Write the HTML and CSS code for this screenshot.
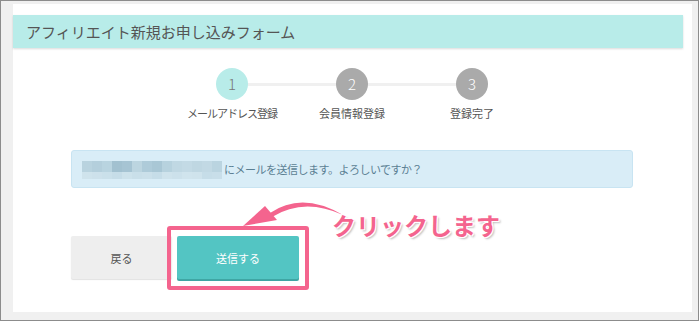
FILE: index.html
```html
<!DOCTYPE html>
<html lang="ja">
<head>
    <meta charset="UTF-8">
    <title>アフィリエイト新規お申し込みフォーム</title>
    <link rel="stylesheet" href="styles.css">
</head>
<body>
    <div class="frame">
        <div class="panel">
            <div class="header">
                <h1>アフィリエイト新規お申し込みフォーム</h1>
            </div>

            <div class="steps">
                <div class="step active">
                    <div class="circle">1</div>
                    <div class="label tight">メールアドレス登録</div>
                </div>
                <div class="step">
                    <div class="circle">2</div>
                    <div class="label">会員情報登録</div>
                </div>
                <div class="step last">
                    <div class="circle">3</div>
                    <div class="label">登録完了</div>
                </div>
            </div>

            <div class="notice">
                <div class="mosaic">
                    <span style="background:#b9d3df"></span><span style="background:#b4cfdc"></span><span style="background:#b9d4e0"></span><span style="background:#a2c1d0"></span><span style="background:#a6c4d3"></span><span style="background:#bcd5e0"></span><span style="background:#aecbd9"></span><span style="background:#a9c7d5"></span><span style="background:#b7d2de"></span><span style="background:#c0d8e3"></span><span style="background:#c3dae5"></span><span style="background:#bfd7e2"></span><span style="background:#c2d9e4"></span><span style="background:#bad4e0"></span>
                    <span style="background:#cfe3ec"></span><span style="background:#cde1eb"></span><span style="background:#cae0ea"></span><span style="background:#c6dde8"></span><span style="background:#cde2eb"></span><span style="background:#c9dfe9"></span><span style="background:#cbe0ea"></span><span style="background:#c6dde8"></span><span style="background:#cfe3ec"></span><span style="background:#cce1eb"></span><span style="background:#d0e4ed"></span><span style="background:#cfe3ec"></span><span style="background:#c6dde8"></span><span style="background:#c8dee9"></span>
                </div>
                <span class="notice-text">にメールを送信します。よろしいですか？</span>
            </div>

            <div class="actions">
                <button class="btn back">戻る</button>
                <button class="btn send">送信する</button>
            </div>

            <!-- annotation -->
            <div class="highlight"></div>
            <svg class="arrow" width="120" height="40" viewBox="0 0 120 40">
                <path d="M30 20 Q62 -2 103 22 Q64 4 32 24 Z" fill="#f4648e"/>
                <polygon points="3,33 25,13 37,27" fill="#f4648e"/>
            </svg>
            <div class="note">クリックします</div>
        </div>
    </div>
</body>
</html>
```

FILE: styles.css
```css
html, body {
    margin: 0;
    padding: 0;
}
body {
    font-family: "Noto Sans CJK JP", "Noto Sans", sans-serif;
    color: #555;
}
.frame {
    width: 699px;
    height: 321px;
    box-sizing: border-box;
    border: 1px solid #8c8c8c;
    background: #f0f0f0;
    padding: 3px 6px 8px 12px;
}
.panel {
    position: relative;
    background: #fff;
    height: 100%;
    padding-top: 11px;
    box-sizing: border-box;
}
.header {
    margin-right: 9px;
    height: 33px;
    background: #b8ece9;
    box-shadow: 0 1px 2px rgba(0,0,0,0.15);
}
.header h1 {
    margin: 0;
    padding-left: 13px;
    font-size: 15px;
    font-weight: normal;
    line-height: 33px;
    color: #555;
}
.steps {
    display: flex;
    margin: 20px 0 0 159px;
}
.step {
    position: relative;
    width: 120px;
    display: flex;
    flex-direction: column;
    align-items: center;
}
.step::after {
    content: "";
    position: absolute;
    top: 15px;
    left: 60px;
    width: 120px;
    height: 3px;
    background: #f0f0f0;
}
.step.last::after {
    display: none;
}
.circle {
    position: relative;
    z-index: 1;
    width: 32px;
    height: 32px;
    border-radius: 50%;
    background: #aaa;
    color: #fff;
    font-size: 15px;
    font-weight: 300;
    line-height: 32px;
    text-align: center;
}
.step.active .circle {
    background: #b8ece9;
    color: #777;
}
.label {
    margin-top: 6px;
    font-size: 11px;
    line-height: 14px;
    color: #555;
    white-space: nowrap;
}
.label.tight {
    letter-spacing: -1px;
}
.notice {
    display: flex;
    align-items: center;
    margin: 30px 0 0 58px;
    width: 562px;
    height: 38px;
    box-sizing: border-box;
    padding-left: 10px;
    background: #d9edf7;
    border: 1px solid #c8e4f2;
    border-radius: 3px;
}
.mosaic {
    display: grid;
    grid-template-columns: repeat(14, 10px);
    grid-template-rows: 11px 7px;
    margin-top: 2px;
}
.mosaic span {
    display: block;
}
.notice-text {
    margin-left: 2px;
    font-size: 11px;
    letter-spacing: -0.5px;
    color: #5b7f93;
}
.actions {
    display: flex;
    gap: 5px;
    margin: 48px 0 0 58px;
}
.btn {
    height: 43px;
    border: none;
    border-radius: 2px;
    font-family: inherit;
    font-size: 11px;
    cursor: pointer;
}
.btn.back {
    width: 101px;
    background: #eee;
    color: #555;
    box-shadow: 0 1px 1px rgba(0,0,0,0.12);
}
.btn.send {
    width: 122px;
    background: #53c5c3;
    color: #fff;
    box-shadow: 0 2px 0 #3fa6a4;
}
.highlight {
    position: absolute;
    left: 154px;
    top: 222px;
    width: 142px;
    height: 64px;
    box-sizing: border-box;
    border: 4px solid #f4648e;
    border-radius: 3px;
}
.arrow {
    position: absolute;
    left: 227px;
    top: 189px;
}
.note {
    position: absolute;
    left: 319px;
    top: 205px;
    font-size: 24px;
    font-weight: bold;
    line-height: 32px;
    color: #f4648e;
    text-shadow: 1px 1px 0 #fff, -1px -1px 0 #fff, 1px -1px 0 #fff, -1px 1px 0 #fff, 2px 2px 2px rgba(0,0,0,0.25);
    white-space: nowrap;
}
```
